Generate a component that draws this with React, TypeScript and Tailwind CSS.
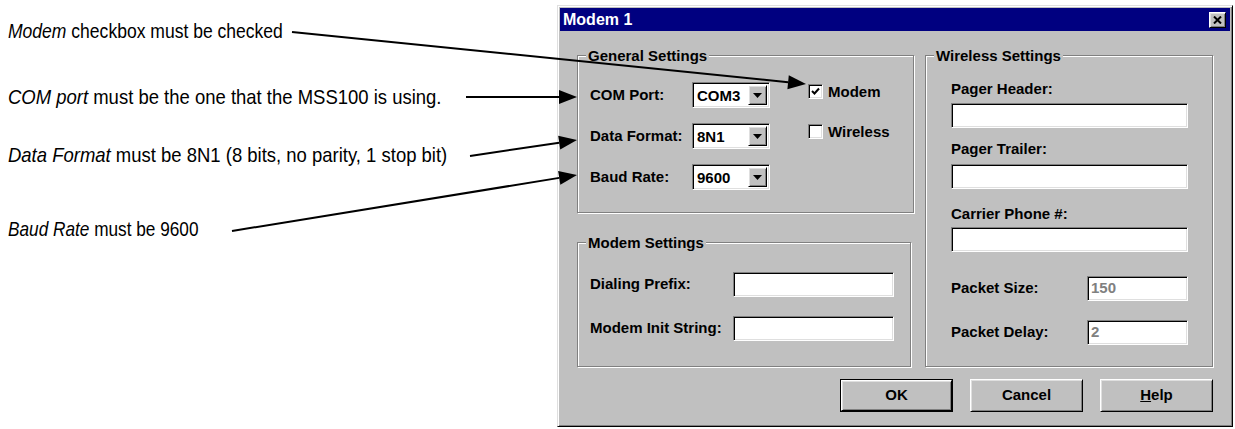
import React from "react";

const dlgFont = { fontFamily: "'Liberation Sans', Arial, sans-serif" };
const noteFont = { fontFamily: "'Liberation Sans', Arial, sans-serif" };

const sunken =
  "border border-t-[#808080] border-l-[#808080] border-r-white border-b-white shadow-[inset_1px_1px_0_#000,inset_-1px_-1px_0_#dfdfdf] bg-white";
const raised =
  "border border-t-white border-l-white border-r-black border-b-black shadow-[inset_1px_1px_0_#dfdfdf,inset_-1px_-1px_0_#808080] bg-[#c0c0c0]";
const etched =
  "border border-[#808080] shadow-[inset_1px_1px_0_#fff,1px_1px_0_#fff]";

function Legend({ children }: { children: React.ReactNode }) {
  return (
    <div className="-mt-[9px] h-[17px] flex">
      <span className="ml-[8px] px-[2px] bg-[#c0c0c0] leading-[17px] text-[15px] font-bold text-black">
        {children}
      </span>
    </div>
  );
}

function Dropdown({ value }: { value: string }) {
  return (
    <div className={`${sunken} w-[78px] h-[26px] flex items-center justify-between pl-[4px] pr-[2px]`}>
      <span className="text-[15px] font-bold leading-none">{value}</span>
      <div className={`${raised} w-[19px] h-[20px] flex items-center justify-center`}>
        <svg width="9" height="5" viewBox="0 0 9 5">
          <polygon points="0,0 9,0 4.5,5" fill="#000" />
        </svg>
      </div>
    </div>
  );
}

function Check({ checked, label }: { checked: boolean; label: string }) {
  return (
    <div className="flex items-center h-[16px] gap-[5px]">
      <div className={`${sunken} w-[15px] h-[15px] flex items-center justify-center`}>
        {checked && (
          <svg width="9" height="9" viewBox="0 0 9 9">
            <path d="M1 4 L3.5 6.5 L8 1.5" stroke="#000" strokeWidth="2" fill="none" />
          </svg>
        )}
      </div>
      <span className="text-[15px] font-bold leading-none">{label}</span>
    </div>
  );
}

function Button({ children, def }: { children: React.ReactNode; def?: boolean }) {
  const inner = (
    <div className={`${raised} w-full h-full flex items-center justify-center text-[15px] font-bold`}>
      {children}
    </div>
  );
  return def ? (
    <div className="w-[113px] h-[33px] border border-black">{inner}</div>
  ) : (
    <div className="w-[113px] h-[33px]">{inner}</div>
  );
}

function arrow(x1: number, y1: number, x2: number, y2: number) {
  const dx = x2 - x1;
  const dy = y2 - y1;
  const len = Math.hypot(dx, dy);
  const ux = dx / len;
  const uy = dy / len;
  const L = 18;
  const W = 7;
  const bx = x2 - ux * L;
  const by = y2 - uy * L;
  const nx = -uy;
  const ny = ux;
  const pts = `${x2},${y2} ${bx + nx * W},${by + ny * W} ${bx - nx * W},${by - ny * W}`;
  return (
    <g key={`${x1}-${y1}`}>
      <line x1={x1} y1={y1} x2={bx} y2={by} stroke="#000" strokeWidth="2" />
      <polygon points={pts} fill="#000" />
    </g>
  );
}

export default function App() {
  return (
    <div className="relative w-[1235px] h-[429px] bg-white overflow-hidden flex">
      {/* Annotations */}
      <div className="w-[557px] shrink-0 flex flex-col pl-[8px] pt-[19px] text-[21px] leading-[24px] text-black" style={noteFont}>
        <div className="scale-x-[0.835] origin-left whitespace-nowrap">
          <i>Modem</i> checkbox must be checked
        </div>
        <div className="mt-[42px] scale-x-[0.88] origin-left whitespace-nowrap">
          <i>COM port</i> must be the one that the MSS100 is using.
        </div>
        <div className="mt-[34px] scale-x-[0.88] origin-left whitespace-nowrap">
          <i>Data Format</i> must be 8N1 (8 bits, no parity, 1 stop bit)
        </div>
        <div className="mt-[50px] scale-x-[0.82] origin-left whitespace-nowrap">
          <i>Baud Rate</i> must be 9600
        </div>
      </div>

      {/* Dialog */}
      <div
        className="mt-[5px] w-[676px] h-[422px] bg-[#c0c0c0] border border-t-[#dfdfdf] border-l-[#dfdfdf] border-r-black border-b-black shadow-[inset_1px_1px_0_#fff,inset_-1px_-1px_0_#808080] p-[2px] flex flex-col text-black"
        style={dlgFont}
      >
        <div className="h-[23px] bg-[#000080] flex items-center justify-between pl-[3px] pr-[4px]">
          <span className="text-white font-bold text-[16px] leading-none">Modem 1</span>
          <div className={`${raised} w-[17px] h-[16px] flex items-center justify-center`}>
            <svg width="9" height="8" viewBox="0 0 9 8">
              <path d="M1 0.5 L8 7.5 M8 0.5 L1 7.5" stroke="#000" strokeWidth="2" />
            </svg>
          </div>
        </div>

        <div className="flex flex-col pl-[17px] pr-[17px] pt-[24px]">
          <div className="flex gap-[11px]">
            {/* Left column */}
            <div className="w-[337px] flex flex-col">
              <div className={`${etched} h-[158px] flex flex-col`}>
                <Legend>General Settings</Legend>
                <div className="flex">
                  <div className="ml-[12px] mt-[18px] flex flex-col gap-[15px]">
                    {[
                      ["COM Port:", "COM3"],
                      ["Data Format:", "8N1"],
                      ["Baud Rate:", "9600"],
                    ].map(([l, v]) => (
                      <div key={l} className="flex items-center h-[26px]">
                        <span className="w-[102px] text-[15px] font-bold">{l}</span>
                        <Dropdown value={v} />
                      </div>
                    ))}
                  </div>
                  <div className="ml-[38px] mt-[19px] flex flex-col gap-[24px]">
                    <Check checked label="Modem" />
                    <Check checked={false} label="Wireless" />
                  </div>
                </div>
              </div>

              <div className={`${etched} mt-[29px] w-[334px] h-[125px] flex flex-col`}>
                <Legend>Modem Settings</Legend>
                <div className="ml-[12px] mt-[21px] flex flex-col gap-[19px]">
                  {["Dialing Prefix:", "Modem Init String:"].map((l) => (
                    <div key={l} className="flex items-center h-[25px]">
                      <span className="w-[143px] text-[15px] font-bold">{l}</span>
                      <div className={`${sunken} w-[161px] h-[25px]`} />
                    </div>
                  ))}
                </div>
              </div>
            </div>

            {/* Wireless */}
            <div className={`${etched} w-[288px] h-[312px] flex flex-col`}>
              <Legend>Wireless Settings</Legend>
              <div className="pl-[25px] flex flex-col">
                <span className="mt-[16px] h-[17px] leading-[17px] text-[15px] font-bold">Pager Header:</span>
                <div className={`${sunken} mt-[6px] w-[237px] h-[25px]`} />
                <span className="mt-[12px] h-[17px] leading-[17px] text-[15px] font-bold">Pager Trailer:</span>
                <div className={`${sunken} mt-[7px] w-[237px] h-[25px]`} />
                <span className="mt-[16px] h-[17px] leading-[17px] text-[15px] font-bold">Carrier Phone #:</span>
                <div className={`${sunken} mt-[5px] w-[237px] h-[25px]`} />
                <div className="mt-[24px] flex items-center h-[25px]">
                  <span className="w-[136px] text-[15px] font-bold">Packet Size:</span>
                  <div className={`${sunken} w-[101px] h-[25px] flex items-center pl-[3px] text-[15px] font-bold text-[#808080]`}>
                    150
                  </div>
                </div>
                <div className="mt-[19px] flex items-center h-[25px]">
                  <span className="w-[136px] text-[15px] font-bold">Packet Delay:</span>
                  <div className={`${sunken} w-[101px] h-[25px] flex items-center pl-[3px] text-[15px] font-bold text-[#808080]`}>
                    2
                  </div>
                </div>
              </div>
            </div>
          </div>

          <div className="mt-[12px] flex justify-end gap-[17px]">
            <Button def>OK</Button>
            <Button>Cancel</Button>
            <Button>
              <span>
                <span className="underline">H</span>elp
              </span>
            </Button>
          </div>
        </div>
      </div>

      {/* Callout arrows */}
      <svg className="absolute inset-0 pointer-events-none" width="1235" height="429">
        {arrow(292, 32, 806, 84)}
        {arrow(466, 97, 577, 97)}
        {arrow(470, 156, 577, 140)}
        {arrow(232, 231, 577, 175)}
      </svg>
    </div>
  );
}
